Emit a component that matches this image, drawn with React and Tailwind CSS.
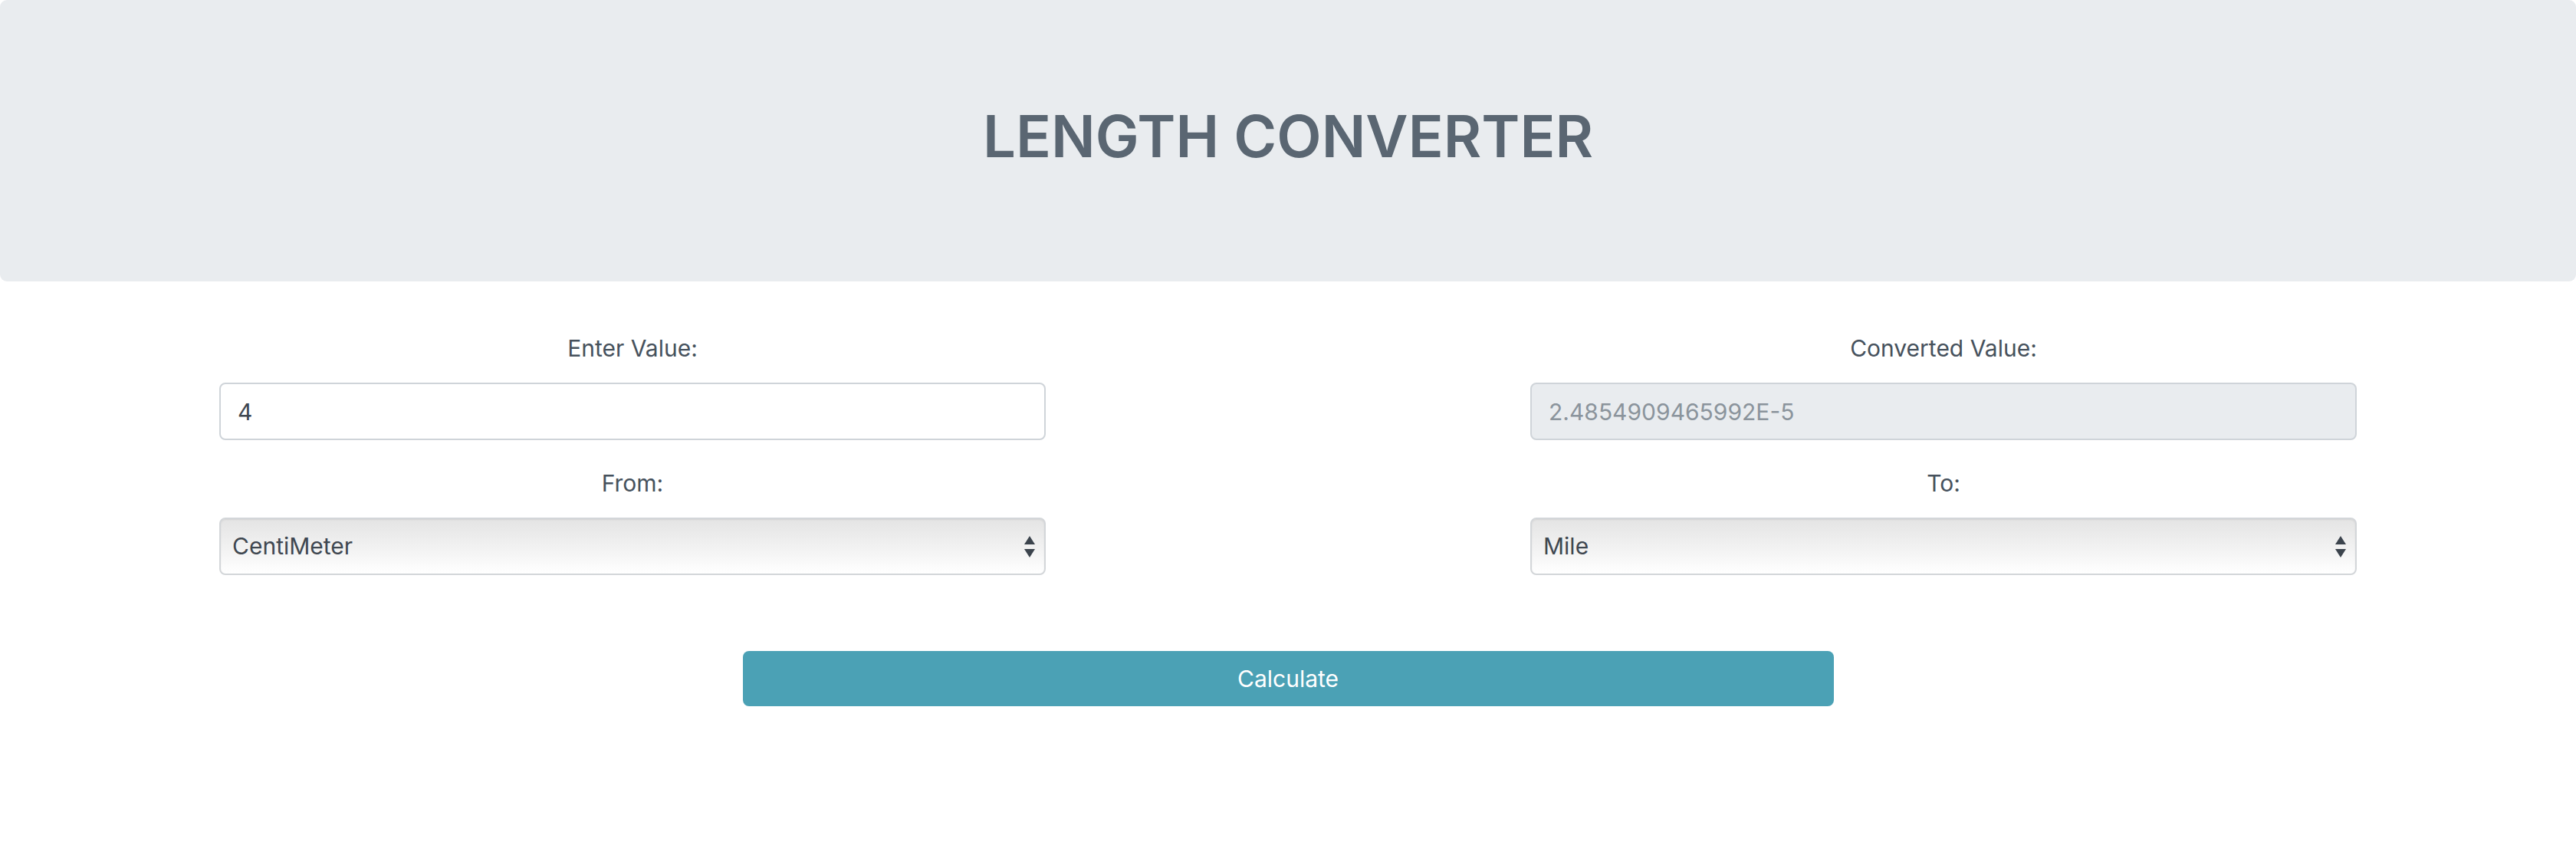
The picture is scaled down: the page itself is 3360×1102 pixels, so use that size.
import { useState } from "react";

const font = { fontFamily: "Inter, 'Noto Sans', sans-serif" };

function SelectBox({ value }) {
  return (
    <div className="relative h-[75px] w-full rounded-[8px] border-[2px] border-[#d3d6d9] bg-gradient-to-b from-[#e4e4e4] via-[#f1f1f1] to-[#ffffff] shadow-[inset_0_1px_2px_rgba(0,0,0,0.08)] flex items-center pl-[15px]">
      <span className="text-[30px] text-[#3f4750]">{value}</span>
      <div className="absolute right-[12px] top-1/2 -translate-y-1/2 flex flex-col items-center gap-[6px]">
        <svg width="14" height="11" viewBox="0 0 14 11">
          <polygon points="7,0 14,11 0,11" fill="#3c444d" />
        </svg>
        <svg width="14" height="11" viewBox="0 0 14 11">
          <polygon points="0,0 14,0 7,11" fill="#3c444d" />
        </svg>
      </div>
    </div>
  );
}

function Field({ label, children, className = "" }) {
  return (
    <div className={"flex flex-col " + className}>
      <label className="text-center text-[30px] leading-[45px] text-[#46515c] mb-[22px]">
        {label}
      </label>
      {children}
    </div>
  );
}

export default function App() {
  const [value, setValue] = useState("4");

  return (
    <div className="min-h-[1102px] bg-white" style={font}>
      <div className="h-[367px] bg-[#e9ecef] rounded-[9px] flex items-center justify-center">
        <h1 className="text-[76px] font-semibold text-[#5a6672] mb-[14px]">
          LENGTH CONVERTER
        </h1>
      </div>

      <div className="w-[2788px] mx-auto pt-[65px] flex justify-between">
        <div className="w-[1078px]">
          <Field label="Enter Value:">
            <input
              value={value}
              onChange={(e) => setValue(e.target.value)}
              className="h-[75px] w-full rounded-[8px] border-[2px] border-[#cfd4d9] bg-white px-[22px] text-[30px] text-[#3f4750] outline-none"
            />
          </Field>
          <Field label="From:" className="mt-[34px]">
            <SelectBox value="CentiMeter" />
          </Field>
        </div>

        <div className="w-[1078px]">
          <Field label="Converted Value:">
            <input
              readOnly
              value="2.4854909465992E-5"
              className="h-[75px] w-full rounded-[8px] border-[2px] border-[#cfd4d9] bg-[#e9ecef] px-[22px] text-[30px] text-[#8b949c] outline-none"
            />
          </Field>
          <Field label="To:" className="mt-[34px]">
            <SelectBox value="Mile" />
          </Field>
        </div>
      </div>

      <div className="flex justify-center pt-[99px]">
        <button className="h-[72px] w-[1423px] rounded-[8px] bg-[#4ba1b5] text-[30px] text-white">
          Calculate
        </button>
      </div>
    </div>
  );
}
